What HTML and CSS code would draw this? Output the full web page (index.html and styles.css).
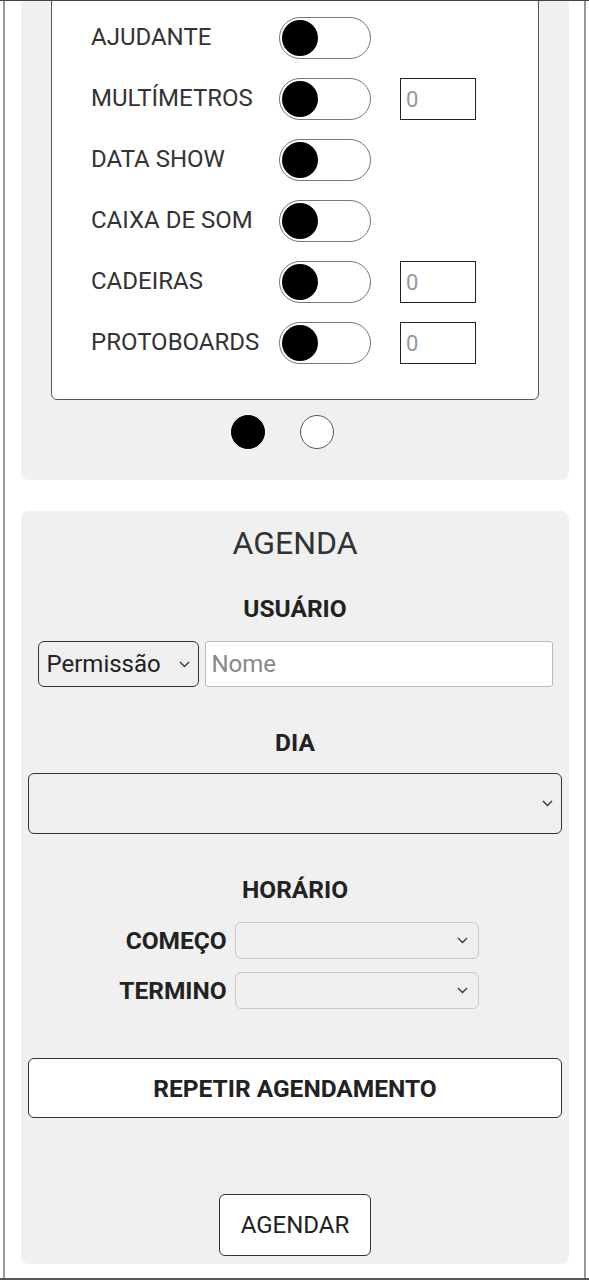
FILE: index.html
```html
<!DOCTYPE html>
<html lang="pt-br">
<head>
    <meta charset="UTF-8">
    <meta name="viewport" content="width=device-width, initial-scale=1.0">
    <title>Agenda</title>
    <link rel="stylesheet" href="styles.css">
</head>
<body>

<div class="tela">
<div class="pagina">

    <!-- Equipamentos -->
    <div class="painel painel-equip">
        <div class="cartao">
            <div class="item">
                <span class="nome">AJUDANTE</span>
                <label class="switch"><input type="checkbox"><span class="bola"></span></label>
            </div>
            <div class="item">
                <span class="nome">MULTÍMETROS</span>
                <label class="switch"><input type="checkbox"><span class="bola"></span></label>
                <input class="qtd" type="number" placeholder="0">
            </div>
            <div class="item">
                <span class="nome">DATA SHOW</span>
                <label class="switch"><input type="checkbox"><span class="bola"></span></label>
            </div>
            <div class="item">
                <span class="nome">CAIXA DE SOM</span>
                <label class="switch"><input type="checkbox"><span class="bola"></span></label>
            </div>
            <div class="item">
                <span class="nome">CADEIRAS</span>
                <label class="switch"><input type="checkbox"><span class="bola"></span></label>
                <input class="qtd" type="number" placeholder="0">
            </div>
            <div class="item">
                <span class="nome">PROTOBOARDS</span>
                <label class="switch"><input type="checkbox"><span class="bola"></span></label>
                <input class="qtd" type="number" placeholder="0">
            </div>
        </div>

        <div class="pontos">
            <span class="ponto ativo"></span>
            <span class="ponto"></span>
        </div>
    </div>

    <!-- Agenda -->
    <div class="painel painel-agenda">
        <h2>AGENDA</h2>

        <h3 class="titulo-usuario">USUÁRIO</h3>
        <div class="linha-usuario">
            <select class="sel-permissao">
                <option>Permissão</option>
            </select>
            <input class="campo-nome" type="text" placeholder="Nome">
        </div>

        <h3 class="titulo">DIA</h3>
        <select class="sel-dia"></select>

        <h3 class="titulo">HORÁRIO</h3>
        <div class="horario">
            <label>COMEÇO</label>
            <select class="sel-hora"></select>
            <label>TERMINO</label>
            <select class="sel-hora"></select>
        </div>

        <button class="btn-repetir">REPETIR AGENDAMENTO</button>

        <button class="btn-agendar">AGENDAR</button>
    </div>

</div>
</div>

</body>
</html>
```

FILE: styles.css
```css
body {
    font-family: Roboto, "Liberation Sans", sans-serif;
    background-color: #fff;
    color: #333;
    margin: 0;
    padding: 0;
}

.tela {
    height: 1280px;
    box-sizing: border-box;
    border-top: 1px solid #444;
    border-bottom: 2px solid #555;
    overflow: hidden;
}

.pagina {
    display: flow-root;
    height: 100%;
    margin: 0 3px;
    border-left: 2px solid #999;
    border-right: 2px solid #999;
}

.painel {
    background-color: #f0f0f0;
    border-radius: 8px;
    margin: 0 15px 0 16px;
}

/* Painel de equipamentos (rolado para cima) */
.painel-equip {
    margin-top: -25px;
    padding: 20px 30px 31px 30px;
}

.cartao {
    background-color: #fff;
    border: 1px solid #555;
    border-radius: 6px;
    padding: 20px 0 35px 39px;
    display: flex;
    flex-direction: column;
    gap: 19px;
}

.item {
    display: flex;
    align-items: center;
    height: 42px;
}

.nome {
    width: 188px;
    font-size: 24px;
    color: #333;
    margin-top: -3px;
}

.switch {
    width: 92px;
    height: 42px;
    box-sizing: border-box;
    border: 1px solid #777;
    border-radius: 21px;
    display: flex;
    align-items: center;
    padding: 0 2px;
    cursor: pointer;
}

.switch input {
    display: none;
}

.bola {
    width: 36px;
    height: 36px;
    border-radius: 50%;
    background-color: #000;
}

.qtd {
    width: 76px;
    height: 42px;
    box-sizing: border-box;
    margin-left: 29px;
    border: 1px solid #222;
    padding: 0 5px;
    font-family: inherit;
    font-size: 22px;
    color: #333;
    -moz-appearance: textfield;
}

.qtd::placeholder {
    color: #999;
}

.qtd::-webkit-inner-spin-button {
    -webkit-appearance: none;
}

.pontos {
    display: flex;
    justify-content: center;
    gap: 35px;
    margin-top: 15px;
    padding-right: 26px;
}

.ponto {
    width: 34px;
    height: 34px;
    box-sizing: border-box;
    border-radius: 50%;
    border: 1px solid #555;
    background-color: #fff;
}

.ponto.ativo {
    background-color: #000;
    border-color: #000;
}

/* Painel da agenda */
.painel-agenda {
    margin-top: 31px;
    padding: 14px 7px 8px 7px;
    display: flex;
    flex-direction: column;
}

h2 {
    margin: 0;
    font-size: 32px;
    line-height: 36px;
    font-weight: 400;
    text-align: center;
    color: #333;
}

h3 {
    margin: 0;
    font-size: 24.5px;
    line-height: 28px;
    font-weight: 700;
    text-align: center;
    color: #222;
}

.titulo-usuario {
    margin-top: 34px;
}

.titulo {
    margin-top: 42px;
}

select {
    -webkit-appearance: none;
    appearance: none;
    font-family: inherit;
    color: #222;
    background-color: #efefef;
    background-image: url("data:image/svg+xml,%3Csvg xmlns='http://www.w3.org/2000/svg' width='11' height='7' viewBox='0 0 11 7'%3E%3Cpath d='M1 1l4.5 4.5L10 1' fill='none' stroke='%23333' stroke-width='1.3'/%3E%3C/svg%3E");
    background-repeat: no-repeat;
    background-position: right 8px center;
    box-sizing: border-box;
    border-radius: 6px;
}

.linha-usuario {
    display: flex;
    justify-content: center;
    gap: 6px;
    margin-top: 18px;
}

.sel-permissao {
    width: 161px;
    height: 46px;
    border: 1px solid #333;
    padding: 0 0 0 8px;
    font-size: 24px;
}

.campo-nome {
    width: 348px;
    height: 46px;
    box-sizing: border-box;
    border: 1px solid #bbb;
    border-radius: 3px;
    padding: 0 6px;
    font-family: inherit;
    font-size: 24px;
    color: #222;
    background-color: #fff;
}

.campo-nome::placeholder {
    color: #888;
}

.sel-dia {
    width: 100%;
    height: 61px;
    margin-top: 16px;
    border: 1px solid #333;
}

.horario {
    display: grid;
    grid-template-columns: auto 244px;
    justify-content: center;
    align-items: center;
    column-gap: 8px;
    row-gap: 13px;
    margin-top: 18px;
    padding-left: 8px;
}

.horario label {
    font-size: 24.5px;
    font-weight: 700;
    color: #222;
    text-align: right;
}

.sel-hora {
    width: 244px;
    height: 37px;
    border: 1px solid #c8c8c8;
    background-position: right 10px center;
}

button {
    font-family: inherit;
    background-color: #fff;
    border: 1px solid #333;
    border-radius: 6px;
    color: #222;
    cursor: pointer;
}

.btn-repetir {
    width: 100%;
    height: 60px;
    margin-top: 49px;
    font-size: 24.5px;
    font-weight: 700;
}

.btn-agendar {
    align-self: center;
    width: 152px;
    height: 62px;
    margin-top: 76px;
    font-size: 24px;
}
```
